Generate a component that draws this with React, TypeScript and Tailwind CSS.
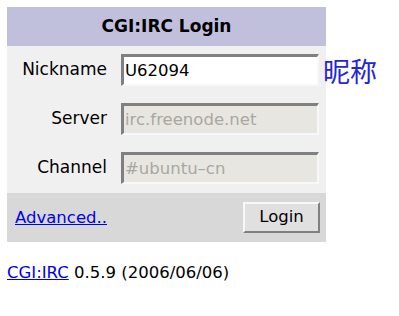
export default function App() {
  return (
    <div className="min-h-screen bg-white px-[7px] pt-[7px] text-black" style={{ fontFamily: '"DejaVu Sans", sans-serif' }}>
      <div className="flex items-start">
        <div className="w-[319px]">
          <div className="flex h-[39px] items-center justify-center bg-[#c0c0dd] text-[17px] font-bold">CGI:IRC Login</div>
          <div className="flex flex-col gap-[17px] bg-[#f0f0f0] pb-[9px] pt-[8px] text-[17px]">
            {[
              ["Nickname", "U62094", false],
              ["Server", "irc.freenode.net", true],
              ["Channel", "#ubuntu–cn", true],
            ].map(([label, value, disabled]) => (
              <div key={label as string} className="flex items-center">
                <span className="w-[107px] pr-[7px] text-right">{label}</span>
                <input
                  readOnly
                  value={value as string}
                  className={
                    "ml-[7px] h-[32px] w-[198px] border-2 border-t-[3px] border-l-[3px] border-t-[#808080] border-l-[#808080] border-r-[#f8f8f8] border-b-[#f8f8f8] px-[1px] text-[16.5px] outline-none " +
                    (disabled ? "bg-[#e8e6e0] text-[#a8a8a0]" : "bg-white text-black")
                  }
                />
              </div>
            ))}
          </div>
          <div className="flex h-[49px] items-center justify-between bg-[#d8d8d8] pl-[8px] pr-[6px]">
            <a href="#" className="mt-[2px] text-[16.5px] text-[#0000ee] underline">Advanced..</a>
            <button className="h-[31px] w-[77px] border-2 border-t-[#f8f8f8] border-l-[#f8f8f8] border-r-[#808080] border-b-[#808080] bg-[#e0e0e0] text-[16.5px]">Login</button>
          </div>
        </div>
        <span className="ml-[-3px] mt-[50px] text-[27px] leading-none text-[#2424d8]" style={{ fontFamily: '"Noto Sans CJK SC", sans-serif' }}>昵称</span>
      </div>
      <div className="mt-[19px] text-[16.5px]">
        <a href="#" className="text-[#0000ee] underline">CGI:IRC</a> 0.5.9 (2006/06/06)
      </div>
    </div>
  )
}
